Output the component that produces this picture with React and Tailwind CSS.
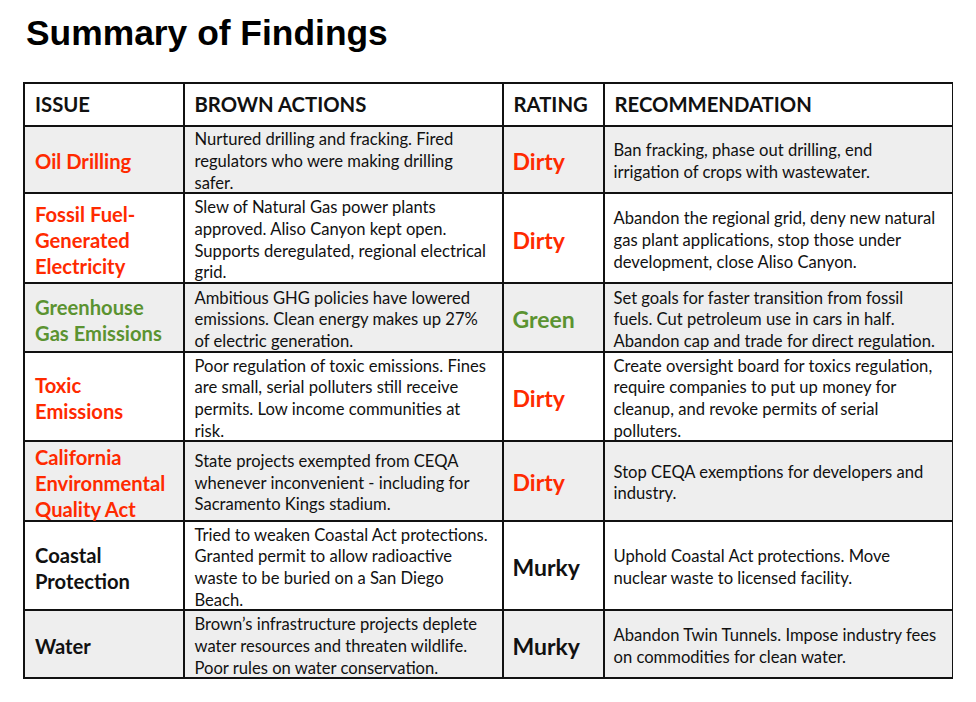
import React from "react";

const RED = "text-[#ff2a00]";
const GREEN = "text-[#5b9331]";

const rows = [
  {
    bg: "bg-[#eeeeee]",
    issue: ["Oil Drilling"],
    issueColor: RED,
    actions: ["Nurtured drilling and fracking. Fired", "regulators who were making drilling", "safer."],
    rating: "Dirty",
    ratingColor: RED,
    rec: ["Ban fracking, phase out drilling, end", "irrigation of crops with wastewater."],
  },
  {
    bg: "bg-white",
    issue: ["Fossil Fuel-", "Generated", "Electricity"],
    issueColor: RED,
    actions: [
      "Slew of Natural Gas power plants",
      "approved. Aliso Canyon kept open.",
      "Supports deregulated, regional electrical",
      "grid.",
    ],
    rating: "Dirty",
    ratingColor: RED,
    rec: [
      "Abandon the regional grid, deny new natural",
      "gas plant applications, stop those under",
      "development, close Aliso Canyon.",
    ],
  },
  {
    bg: "bg-[#eeeeee]",
    issue: ["Greenhouse", "Gas Emissions"],
    issueColor: GREEN,
    actions: [
      "Ambitious GHG policies have lowered",
      "emissions. Clean energy makes up 27%",
      "of electric generation.",
    ],
    rating: "Green",
    ratingColor: GREEN,
    rec: [
      "Set goals for faster transition from fossil",
      "fuels. Cut petroleum use in cars in half.",
      "Abandon cap and trade for direct regulation.",
    ],
  },
  {
    bg: "bg-white",
    issue: ["Toxic", "Emissions"],
    issueColor: RED,
    actions: [
      "Poor regulation of toxic emissions. Fines",
      "are small, serial polluters still receive",
      "permits. Low income communities at",
      "risk.",
    ],
    rating: "Dirty",
    ratingColor: RED,
    rec: [
      "Create oversight board for toxics regulation,",
      "require companies to put up money for",
      "cleanup, and revoke permits of serial",
      "polluters.",
    ],
  },
  {
    bg: "bg-[#eeeeee]",
    issue: ["California", "Environmental", "Quality Act"],
    issueColor: RED,
    actions: [
      "State projects exempted from CEQA",
      "whenever inconvenient - including for",
      "Sacramento Kings stadium.",
    ],
    rating: "Dirty",
    ratingColor: RED,
    rec: ["Stop CEQA exemptions for developers and", "industry."],
  },
  {
    bg: "bg-white",
    issue: ["Coastal", "Protection"],
    issueColor: "text-[#111111]",
    actions: [
      "Tried to weaken Coastal Act protections.",
      "Granted permit to allow radioactive",
      "waste to be buried on a San Diego",
      "Beach.",
    ],
    rating: "Murky",
    ratingColor: "text-[#111111]",
    rec: ["Uphold Coastal Act protections. Move", "nuclear waste to licensed facility."],
  },
  {
    bg: "bg-[#eeeeee]",
    issue: ["Water"],
    issueColor: "text-[#111111]",
    actions: [
      "Brown’s infrastructure projects deplete",
      "water resources and threaten wildlife.",
      "Poor rules on water conservation.",
    ],
    rating: "Murky",
    ratingColor: "text-[#111111]",
    rec: ["Abandon Twin Tunnels. Impose industry fees", "on commodities for clean water."],
  },
];

function Lines({ lines, className }) {
  return (
    <div className={className}>
      {lines.map((l, i) => (
        <div key={i} className="whitespace-nowrap">
          {l}
        </div>
      ))}
    </div>
  );
}

export default function App() {
  return (
    <div className="w-[976px] h-[702px] bg-white px-[23px] pt-[16px] overflow-hidden">
      <h1 className="pl-[3px] font-['Liberation_Sans',Arial,sans-serif] font-bold text-[35.4px] leading-none text-black">
        Summary of Findings
      </h1>
      <div className="mt-[30.5px] grid grid-cols-[157.5px_317px_99px_347.5px] grid-rows-[41px_65px_88.5px_66.5px_87px_78px_87.5px_65.5px] gap-[2px] p-[2px] bg-[#111111] font-['Lato',sans-serif] text-[#111111]">
        {["ISSUE", "BROWN ACTIONS", "RATING", "RECOMMENDATION"].map((h) => (
          <div key={h} className="bg-white flex items-center pl-[10px] font-bold text-[20.3px] leading-none">
            {h}
          </div>
        ))}
        {rows.map((r, i) => (
          <React.Fragment key={i}>
            <div className={`${r.bg} flex items-center pl-[10px] pt-[4px]`}>
              <Lines lines={r.issue} className={`font-bold text-[20.2px] leading-[26px] ${r.issueColor}`} />
            </div>
            <div className={`${r.bg} flex items-center pl-[10px] pt-[5px]`}>
              <Lines lines={r.actions} className="text-[16.6px] leading-[21.7px]" />
            </div>
            <div className={`${r.bg} flex items-center pl-[9px] pt-[4px]`}>
              <div className={`font-bold text-[23px] leading-none ${r.ratingColor}`}>{r.rating}</div>
            </div>
            <div className={`${r.bg} flex items-center pl-[9px] pt-[5px]`}>
              <Lines lines={r.rec} className="text-[16.6px] leading-[21.7px]" />
            </div>
          </React.Fragment>
        ))}
      </div>
    </div>
  );
}
